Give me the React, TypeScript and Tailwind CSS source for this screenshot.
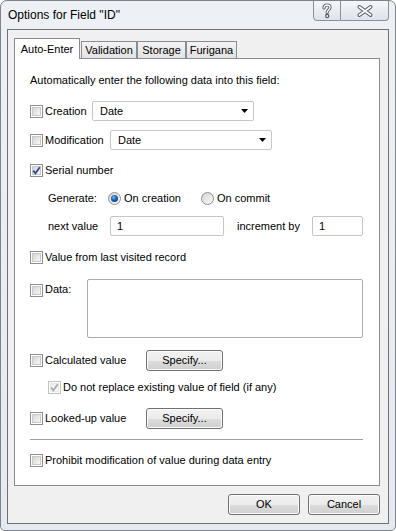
import React from "react";

function CB({ checked = false, disabled = false }: { checked?: boolean; disabled?: boolean }) {
  return (
    <span
      className={`relative block w-[13px] h-[13px] shrink-0 border bg-white ${
        disabled ? "border-[#c2c2c2]" : "border-[#8e8f8f]"
      }`}
    >
      <span
        className={`absolute inset-[1px] border ${
          disabled
            ? "border-[#e6e6e6] bg-linear-to-br from-[#ececec] to-[#fbfbfb]"
            : "border-[#c9c9c9] bg-linear-to-br from-[#d5d5d5] to-[#f8f8f8]"
        }`}
      />
      {checked && (
        <svg className="absolute left-0 top-0" width="11" height="11" viewBox="0 0 11 11">
          <path
            d="M2.2 5.6 L4.4 8.3 L8.8 2.2"
            fill="none"
            stroke={disabled ? "#a9a9a9" : "#2c4592"}
            strokeWidth="1.7"
          />
        </svg>
      )}
    </span>
  );
}

function Radio({ checked = false }: { checked?: boolean }) {
  return (
    <span className="relative block w-[13px] h-[13px] shrink-0 rounded-full border border-[#8e8f8f] bg-linear-to-br from-[#d2d2d2] to-[#fbfbfb]">
      {checked && (
        <span className="absolute inset-[2px] rounded-full bg-[radial-gradient(circle_at_40%_35%,#6cbcf5,#1a5cad_45%,#0b2f66)]" />
      )}
    </span>
  );
}

function Dropdown({ w }: { w: string }) {
  return (
    <div className={`relative h-[20px] ${w} border border-[#c3c6cb] rounded-[2px] bg-white flex items-center pl-[7px]`}>
      <span>Date</span>
      <svg className="absolute right-[4px] top-[7px]" width="8" height="5" viewBox="0 0 8 5">
        <polygon points="0,0 7,0 3.5,4" fill="#000" />
      </svg>
    </div>
  );
}

function TextBox({ w, value }: { w: string; value: string }) {
  return (
    <div className={`h-[20px] ${w} border border-[#c3c6cb] rounded-[2px] bg-white flex items-center pl-[6px]`}>
      {value}
    </div>
  );
}

function Btn({ children, w }: { children: React.ReactNode; w: string }) {
  return (
    <div
      className={`h-[21px] ${w} rounded-[3px] border border-[#707070] shadow-[inset_0_0_0_1px_#fcfcfc] bg-[linear-gradient(#f2f2f2,#ebebeb_50%,#dddddd_50%,#cfcfcf)] flex items-center justify-center`}
    >
      {children}
    </div>
  );
}

export default function App() {
  return (
    <div className="w-[396px] h-[531px] flex flex-col border border-[#7d838b] rounded-t-[7px] rounded-b-[5px] bg-linear-to-b from-[#edf1f6] to-[#e5eaf0] font-['Liberation_Sans',Arial,sans-serif] text-[11px] text-black overflow-hidden">
      {/* Title bar */}
      <div className="h-[28px] flex shrink-0">
        <div className="flex-1 pl-[7px] flex items-center text-[12px]">Options for Field "ID"</div>
        <div className="flex self-start -mt-px mr-[6px]">
          <div className="w-[28px] h-[21px] border border-[#8a9099] rounded-bl-[4px] bg-linear-to-b from-[#f5f7fa] to-[#dde3ea] flex items-center justify-center">
            <svg width="14" height="16" viewBox="0 0 14 16">
              <g fill="none" strokeLinecap="round" strokeLinejoin="round">
                <path d="M4 5 C4 3 5.5 2 7 2 C8.8 2 10 3.1 10 4.6 C10 6.6 7.2 6.8 7.2 9.4" stroke="#5a5f66" strokeWidth="3.2" />
                <circle cx="7.2" cy="13" r="1.4" fill="#5a5f66" stroke="#5a5f66" strokeWidth="1.6" />
                <path d="M4 5 C4 3 5.5 2 7 2 C8.8 2 10 3.1 10 4.6 C10 6.6 7.2 6.8 7.2 9.4" stroke="#ffffff" strokeWidth="1.3" />
                <circle cx="7.2" cy="13" r="0.9" fill="#ffffff" />
              </g>
            </svg>
          </div>
          <div className="w-[48px] h-[21px] border border-l-0 border-[#8a9099] rounded-br-[4px] bg-linear-to-b from-[#f5f7fa] to-[#dde3ea] flex items-center justify-center">
            <svg width="18" height="14" viewBox="0 0 18 14">
              <g strokeLinecap="round">
                <path d="M3.5 3 L14.5 11 M14.5 3 L3.5 11" stroke="#5a5f66" strokeWidth="4" />
                <path d="M3.5 3 L14.5 11 M14.5 3 L3.5 11" stroke="#ffffff" strokeWidth="1.8" />
              </g>
            </svg>
          </div>
        </div>
      </div>

      {/* Client area */}
      <div className="mx-[6px] h-[495px] shrink-0 border border-[#6e7277] bg-[#f0f0f0] flex flex-col">
        {/* Tabs */}
        <div className="pt-[8px] pl-[6px] flex items-end h-[28px] shrink-0">
          <div className="relative z-10 -mb-px h-[21px] w-[66px] border border-b-0 border-[#898c95] bg-white flex items-center justify-center">
            Auto-Enter
          </div>
          <div className="ml-px h-[17px] w-[56px] border border-b-0 border-[#898c95] bg-linear-to-b from-[#f3f3f3] to-[#e2e2e2] flex items-center justify-center">
            Validation
          </div>
          <div className="h-[17px] w-[49px] border border-b-0 border-[#898c95] bg-linear-to-b from-[#f3f3f3] to-[#e2e2e2] flex items-center justify-center">
            Storage
          </div>
          <div className="h-[17px] w-[51px] border border-b-0 border-[#898c95] bg-linear-to-b from-[#f3f3f3] to-[#e2e2e2] flex items-center justify-center">
            Furigana
          </div>
        </div>

        {/* Panel */}
        <div className="ml-[6px] w-[366px] h-[428px] shrink-0 border border-[#898c95] bg-white flex flex-col pl-[15px]">
          <div className="mt-[11px] h-[20px] flex items-center">
            Automatically enter the following data into this field:
          </div>

          <div className="mt-[11px] h-[20px] flex items-center">
            <CB />
            <span className="ml-[2px] w-[47px]">Creation</span>
            <Dropdown w="w-[162px]" />
          </div>

          <div className="mt-[9px] h-[20px] flex items-center">
            <CB />
            <span className="ml-[2px] w-[65px]">Modification</span>
            <Dropdown w="w-[162px]" />
          </div>

          <div className="mt-[10px] h-[20px] flex items-center">
            <CB checked />
            <span className="ml-[2px]">Serial number</span>
          </div>

          <div className="mt-[8px] h-[20px] flex items-center pl-[18px]">
            <span className="w-[60px]">Generate:</span>
            <Radio checked />
            <span className="ml-[3px] w-[77px]">On creation</span>
            <Radio />
            <span className="ml-[3px]">On commit</span>
          </div>

          <div className="mt-[8px] h-[20px] flex items-center pl-[18px]">
            <span className="w-[62px]">next value</span>
            <TextBox w="w-[114px]" value="1" />
            <span className="ml-[13px] w-[62px] whitespace-nowrap">increment by</span>
            <div className="ml-[13px]">
              <TextBox w="w-[51px]" value="1" />
            </div>
          </div>

          <div className="mt-[11px] h-[20px] flex items-center">
            <CB />
            <span className="ml-[2px]">Value from last visited record</span>
          </div>

          <div className="mt-[12px] h-[59px] flex items-start">
            <div className="mt-[5px]">
              <CB />
            </div>
            <span className="ml-[2px] w-[42px] mt-[4px] leading-[13px]">Data:</span>
            <div className="w-[276px] h-[59px] border border-[#a9abb0] rounded-[2px] bg-white" />
          </div>

          <div className="mt-[12px] h-[21px] flex items-center">
            <CB />
            <span className="ml-[2px] w-[101px]">Calculated value</span>
            <Btn w="w-[77px]">Specify...</Btn>
          </div>

          <div className="mt-[6px] h-[20px] flex items-center pl-[18px]">
            <CB checked disabled />
            <span className="ml-[2px]">Do not replace existing value of field (if any)</span>
          </div>

          <div className="mt-[11px] h-[21px] flex items-center">
            <CB />
            <span className="ml-[2px] w-[101px]">Looked-up value</span>
            <Btn w="w-[77px]">Specify...</Btn>
          </div>

          <div className="mt-[10px] h-px w-[333px] bg-[#a0a0a0]" />

          <div className="mt-[10px] h-[20px] flex items-center">
            <CB />
            <span className="ml-[2px]">Prohibit modification of value during data entry</span>
          </div>
        </div>

        {/* Bottom buttons */}
        <div className="mt-[8px] flex justify-end gap-[8px] pr-[8px]">
          <Btn w="w-[72px]">OK</Btn>
          <Btn w="w-[72px]">Cancel</Btn>
        </div>
      </div>
    </div>
  );
}
